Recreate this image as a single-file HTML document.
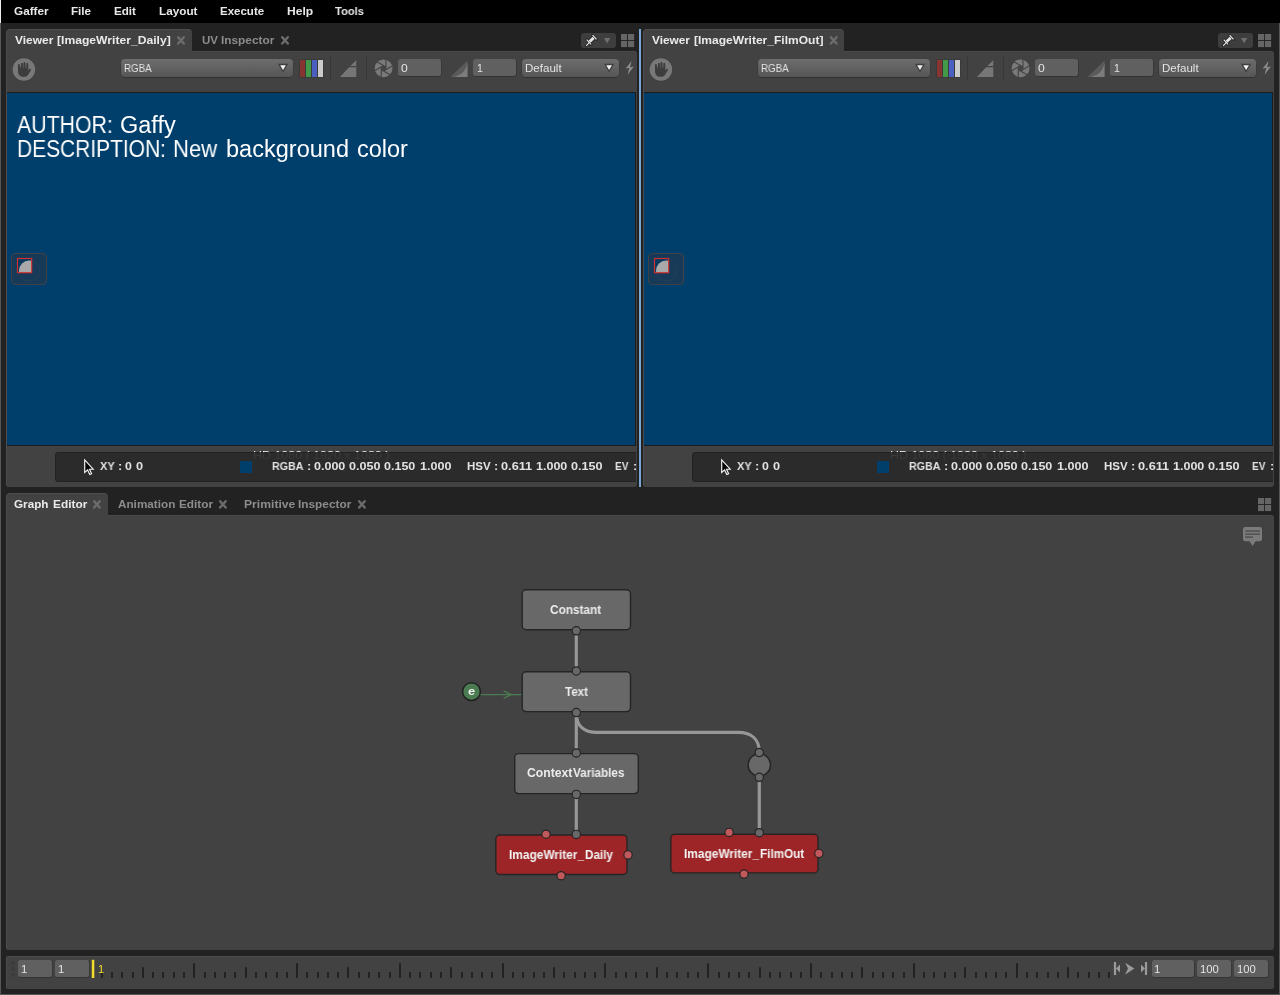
<!DOCTYPE html>
<html><head><meta charset="utf-8"><title>Gaffer</title>
<style>
html,body{margin:0;padding:0}
body{width:1280px;height:995px;position:relative;overflow:hidden;background:#222222;font-family:"Liberation Sans",sans-serif}
.abs{position:absolute}
.menubar{position:absolute;left:0;top:0;width:1280px;height:23px;background:#000}
.tab{position:absolute;box-sizing:border-box}
.tab.act{background:#424242;border-radius:4px 4px 0 0;border-left:1px solid #4d4d4d;border-top:1px solid #4e4e4e}
.panel{position:absolute;box-sizing:border-box;background:#424242;border-left:1px solid #4d4d4d;border-top:1px solid #4a4a4a}
.pinbtn{position:absolute;width:35px;height:14.8px;background:#3e3e3e;border-radius:3px}
.combo{position:absolute;box-sizing:border-box;border-radius:4px;background:linear-gradient(#6d6d6d,#565656);box-shadow:0 0.5px 0.5px 0.3px rgba(30,30,30,0.55)}
.field{position:absolute;box-sizing:border-box;border-radius:2.5px;background:#606060;box-shadow:0.3px 0.6px 0.6px 0.2px rgba(30,30,30,0.5)}
.t{position:absolute;white-space:nowrap;will-change:transform;transform-origin:0 0}
#clipL,#clipR{position:absolute;overflow:hidden}
</style></head><body>
<div class="menubar"></div>
<div class="panel" style="left:6px;top:51px;width:631px;height:436px;border-radius:0 3px 3px 3px"></div>
<div class="tab act" style="left:6px;top:29px;width:185.5px;height:23px"></div>
<svg class="abs" style="left:175px;top:34px" width="13" height="13" viewBox="-6.00 -6.40 13 13"><path d="M-2.8 -3.15 L2.8 3.15 M2.8 -3.15 L-2.8 3.15" stroke="#6c6c6c" stroke-width="2.45" stroke-linecap="round"/></svg>
<svg class="abs" style="left:279px;top:34px" width="13" height="13" viewBox="-6.00 -6.40 13 13"><path d="M-2.8 -3.15 L2.8 3.15 M2.8 -3.15 L-2.8 3.15" stroke="#6c6c6c" stroke-width="2.45" stroke-linecap="round"/></svg>
<div class="pinbtn" style="left:581px;top:33px"></div>
<svg class="abs" style="left:583px;top:33px" width="16" height="15" viewBox="583 33 16 15"><g stroke="#1f1f1f" stroke-width="2.6" stroke-linecap="round" fill="none" opacity="0.75"><path d="M586.2 45.8 L589.6 42.2"/><path d="M586.6 39.5 L591.3 44.6"/><path d="M592.5 35.1 L596.6 39.5"/><path d="M588.6 40.4 L590.6 42.8 L594.8 39 L592.7 36.6 Z" stroke-width="1.6" fill="#1f1f1f"/></g><path d="M586.2 45.8 L589.6 42.2" stroke="#f0f0f0" stroke-width="1.05"/><path d="M586.7 39.6 L591.2 44.5" stroke="#f0f0f0" stroke-width="1.05"/><path d="M592.6 35.2 L596.5 39.4" stroke="#f0f0f0" stroke-width="1.1"/><path d="M588.7 40.5 L590.5 42.7 L594.6 39 L592.7 36.8 Z" fill="#e6e6e6"/></svg>
<svg class="abs" style="left:603px;top:37px" width="9" height="8" viewBox="603 37 9 8"><path d="M603.9 38 L610.3 38 L607.1 43.4 Z" fill="#6e6e6e"/></svg>
<svg class="abs" style="left:621px;top:34px" width="14" height="14" viewBox="0 0 14 14"><rect x="-0.1" y="-0.05" width="6.15" height="6.1" fill="#656565"/><rect x="6.95" y="-0.05" width="6.2" height="6.1" fill="#656565"/><rect x="-0.1" y="6.95" width="6.15" height="6.15" fill="#656565"/><rect x="6.95" y="6.95" width="6.2" height="6.15" fill="#656565"/></svg>
<svg class="abs" style="left:12px;top:57px" width="24" height="25" viewBox="12 57 24 25"><circle cx="23.9" cy="69.45" r="11.7" fill="#3e3e3e"/><circle cx="23.9" cy="69.45" r="11.3" fill="#787878"/><rect x="18.0" y="64.2" width="1.75" height="5.80" rx="0.8" fill="#3d3d3d"/><rect x="21.0" y="63.0" width="1.70" height="7.00" rx="0.8" fill="#3d3d3d"/><rect x="23.7" y="62.2" width="1.60" height="7.80" rx="0.8" fill="#3d3d3d"/><rect x="26.6" y="63.1" width="1.55" height="6.90" rx="0.8" fill="#3d3d3d"/><rect x="19.7" y="66.3" width="7" height="3" fill="#565656"/><rect x="18.0" y="64.2" width="1.75" height="5.80" rx="0.8" fill="#3d3d3d"/><rect x="21.0" y="63.0" width="1.70" height="7.00" rx="0.8" fill="#3d3d3d"/><rect x="23.7" y="62.2" width="1.60" height="7.80" rx="0.8" fill="#3d3d3d"/><rect x="26.6" y="63.1" width="1.55" height="6.90" rx="0.8" fill="#3d3d3d"/><path d="M18 68.3 L18.1 72 C18.3 74.6 19.8 76.5 22.3 76.65 L25 76.65 C26.6 76.5 27.6 75.6 28.4 74.2 L31.2 69.7 L30 68.5 L28.15 70.6 L28.15 68.3 Z" fill="#3d3d3d"/></svg>
<div class="combo" style="left:121px;top:59px;width:172px;height:18px"></div>
<svg class="abs" style="left:277px;top:62px" width="13" height="12" viewBox="0 0 13 12"><path d="M2.00 2.50 L10.00 2.50 L6.00 9.40 Z" fill="#f2f2f2" stroke="#3f3f3f" stroke-width="1.3" stroke-linejoin="miter"/></svg>
<div class="abs" style="left:299.3px;top:59.3px;width:24.6px;height:18.4px;background:#3a3a3a;border-radius:1px"></div>
<div class="abs" style="left:299.9px;top:59.9px;width:5.3px;height:17.2px;background:#873531"></div>
<div class="abs" style="left:305.9px;top:59.9px;width:5.3px;height:17.2px;background:#429948"></div>
<div class="abs" style="left:311.9px;top:59.9px;width:5.3px;height:17.2px;background:#4b5fc1"></div>
<div class="abs" style="left:317.9px;top:59.9px;width:5.3px;height:17.2px;background:#cbcbcb"></div>
<div class="abs" style="left:330px;top:56px;width:1px;height:25px;background:#383838"></div>
<div class="abs" style="left:366px;top:56px;width:1px;height:25px;background:#383838"></div>
<svg class="abs" style="left:339px;top:59px" width="19" height="19" viewBox="0 0 19 19"><path d="M1 18 L17.3 18 L17.3 8.3 L10.1 8.3 Z M11.3 7.1 L17.3 7.1 L17.3 1.2 Z" fill="#767676"/></svg>
<svg class="abs" style="left:374px;top:59px" width="20" height="20" viewBox="-0.60 -0.30 20 20"><circle cx="9" cy="9" r="8.9" fill="#7a7a7a"/><polygon points="11.35,10.36 9.00,11.71 6.65,10.36 6.65,7.64 9.00,6.29 11.35,7.64" fill="#454545"/><path d="M11.35 10.36 L11.35 0.06" stroke="#454545" stroke-width="1.15"/><path d="M9.00 11.71 L17.92 6.56" stroke="#454545" stroke-width="1.15"/><path d="M6.65 10.36 L15.57 15.51" stroke="#454545" stroke-width="1.15"/><path d="M6.65 7.64 L6.65 17.94" stroke="#454545" stroke-width="1.15"/><path d="M9.00 6.29 L0.08 11.44" stroke="#454545" stroke-width="1.15"/><path d="M11.35 7.64 L2.43 2.49" stroke="#454545" stroke-width="1.15"/></svg>
<div class="field" style="left:398.3px;top:59px;width:42.8px;height:17.2px"></div>
<svg class="abs" style="left:449px;top:59px" width="20" height="19" viewBox="0 0 20 19"><path d="M1.5 18 L18.5 18 L18.5 1.5 Z" fill="#5a5a5a"/><path d="M4.5 18 L18.5 18 L18.5 4 C 17 12, 12 16.5, 4.5 18 Z" fill="#7c7c7c"/></svg>
<div class="field" style="left:473.3px;top:59px;width:42.7px;height:17.2px"></div>
<div class="combo" style="left:522px;top:59px;width:97px;height:18px"></div>
<svg class="abs" style="left:603px;top:62px" width="13" height="12" viewBox="0 0 13 12"><path d="M2.10 2.50 L10.10 2.50 L6.10 9.40 Z" fill="#f2f2f2" stroke="#3f3f3f" stroke-width="1.3" stroke-linejoin="miter"/></svg>
<svg class="abs" style="left:623px;top:60px" width="13" height="16" viewBox="0 0 13 16"><path d="M8.6 1 L2.6 8.6 L6.3 8.1 L4.6 14.8 L10.9 6.6 L7.1 7.2 Z" fill="#8a8a8a"/></svg>
<div class="abs" style="left:7px;top:92px;width:629px;height:354px;background:#1c1c1c"></div>
<div class="abs" style="left:7px;top:93px;width:628px;height:352px;background:#003f6c"></div>
<div class="abs" style="left:11px;top:253px;width:36px;height:32px;box-sizing:border-box;border:1px solid #3e4247;border-radius:4px;background:#163a58"></div>
<svg class="abs" style="left:11px;top:253px" width="36" height="32" viewBox="0 0 36 32"><circle cx="18.2" cy="17.7" r="10.4" fill="none" stroke="#2a4055" stroke-width="0.8"/><clipPath id="cp0"><rect x="6.5" y="5.5" width="14.5" height="14.5"/></clipPath><rect x="6.5" y="5.5" width="14.5" height="14.5" fill="#0b3a60"/><circle cx="18.2" cy="17.7" r="10.2" fill="#a9a9a9" clip-path="url(#cp0)"/><rect x="6.5" y="5.5" width="14.2" height="14.2" fill="none" stroke="#d32e2e" stroke-width="1.15"/></svg>
<div class="abs" style="left:55px;top:452px;width:581px;height:30px;overflow:hidden"><div class="abs" style="left:0;top:0;width:700px;height:30px;box-sizing:border-box;background:#2b2b2b;border:1px solid #222;border-radius:3px"></div></div>
<svg class="abs" style="left:82px;top:457px" width="14" height="20" viewBox="82 457 14 20"><path d="M84.7 459.9 L84.7 472.5 L87.6 469.9 L89.8 474.6 L91.6 473.8 L89.5 469.3 L93.2 469.2 Z" fill="#050505" stroke="#f6f6f6" stroke-width="1.15" stroke-linejoin="miter"/></svg>
<div class="abs" style="left:240px;top:461px;width:12px;height:12px;background:#003f6c"></div>
<div class="panel" style="left:643px;top:51px;width:631px;height:436px;border-radius:0 3px 3px 3px"></div>
<div class="tab act" style="left:643px;top:29px;width:201.4px;height:23px"></div>
<svg class="abs" style="left:827px;top:34px" width="13" height="13" viewBox="-6.70 -6.40 13 13"><path d="M-2.8 -3.15 L2.8 3.15 M2.8 -3.15 L-2.8 3.15" stroke="#6c6c6c" stroke-width="2.45" stroke-linecap="round"/></svg>
<div class="pinbtn" style="left:1218px;top:33px"></div>
<svg class="abs" style="left:1220px;top:33px" width="16" height="15" viewBox="583 33 16 15"><g stroke="#1f1f1f" stroke-width="2.6" stroke-linecap="round" fill="none" opacity="0.75"><path d="M586.2 45.8 L589.6 42.2"/><path d="M586.6 39.5 L591.3 44.6"/><path d="M592.5 35.1 L596.6 39.5"/><path d="M588.6 40.4 L590.6 42.8 L594.8 39 L592.7 36.6 Z" stroke-width="1.6" fill="#1f1f1f"/></g><path d="M586.2 45.8 L589.6 42.2" stroke="#f0f0f0" stroke-width="1.05"/><path d="M586.7 39.6 L591.2 44.5" stroke="#f0f0f0" stroke-width="1.05"/><path d="M592.6 35.2 L596.5 39.4" stroke="#f0f0f0" stroke-width="1.1"/><path d="M588.7 40.5 L590.5 42.7 L594.6 39 L592.7 36.8 Z" fill="#e6e6e6"/></svg>
<svg class="abs" style="left:1240px;top:37px" width="9" height="8" viewBox="603 37 9 8"><path d="M603.9 38 L610.3 38 L607.1 43.4 Z" fill="#6e6e6e"/></svg>
<svg class="abs" style="left:1258px;top:34px" width="14" height="14" viewBox="0 0 14 14"><rect x="-0.1" y="-0.05" width="6.15" height="6.1" fill="#656565"/><rect x="6.95" y="-0.05" width="6.2" height="6.1" fill="#656565"/><rect x="-0.1" y="6.95" width="6.15" height="6.15" fill="#656565"/><rect x="6.95" y="6.95" width="6.2" height="6.15" fill="#656565"/></svg>
<svg class="abs" style="left:649px;top:57px" width="24" height="25" viewBox="12 57 24 25"><circle cx="23.9" cy="69.45" r="11.7" fill="#3e3e3e"/><circle cx="23.9" cy="69.45" r="11.3" fill="#787878"/><rect x="18.0" y="64.2" width="1.75" height="5.80" rx="0.8" fill="#3d3d3d"/><rect x="21.0" y="63.0" width="1.70" height="7.00" rx="0.8" fill="#3d3d3d"/><rect x="23.7" y="62.2" width="1.60" height="7.80" rx="0.8" fill="#3d3d3d"/><rect x="26.6" y="63.1" width="1.55" height="6.90" rx="0.8" fill="#3d3d3d"/><rect x="19.7" y="66.3" width="7" height="3" fill="#565656"/><rect x="18.0" y="64.2" width="1.75" height="5.80" rx="0.8" fill="#3d3d3d"/><rect x="21.0" y="63.0" width="1.70" height="7.00" rx="0.8" fill="#3d3d3d"/><rect x="23.7" y="62.2" width="1.60" height="7.80" rx="0.8" fill="#3d3d3d"/><rect x="26.6" y="63.1" width="1.55" height="6.90" rx="0.8" fill="#3d3d3d"/><path d="M18 68.3 L18.1 72 C18.3 74.6 19.8 76.5 22.3 76.65 L25 76.65 C26.6 76.5 27.6 75.6 28.4 74.2 L31.2 69.7 L30 68.5 L28.15 70.6 L28.15 68.3 Z" fill="#3d3d3d"/></svg>
<div class="combo" style="left:758px;top:59px;width:172px;height:18px"></div>
<svg class="abs" style="left:914px;top:62px" width="13" height="12" viewBox="0 0 13 12"><path d="M2.00 2.50 L10.00 2.50 L6.00 9.40 Z" fill="#f2f2f2" stroke="#3f3f3f" stroke-width="1.3" stroke-linejoin="miter"/></svg>
<div class="abs" style="left:936.3px;top:59.3px;width:24.6px;height:18.4px;background:#3a3a3a;border-radius:1px"></div>
<div class="abs" style="left:936.9px;top:59.9px;width:5.3px;height:17.2px;background:#873531"></div>
<div class="abs" style="left:942.9px;top:59.9px;width:5.3px;height:17.2px;background:#429948"></div>
<div class="abs" style="left:948.9px;top:59.9px;width:5.3px;height:17.2px;background:#4b5fc1"></div>
<div class="abs" style="left:954.9px;top:59.9px;width:5.3px;height:17.2px;background:#cbcbcb"></div>
<div class="abs" style="left:967px;top:56px;width:1px;height:25px;background:#383838"></div>
<div class="abs" style="left:1003px;top:56px;width:1px;height:25px;background:#383838"></div>
<svg class="abs" style="left:976px;top:59px" width="19" height="19" viewBox="0 0 19 19"><path d="M1 18 L17.3 18 L17.3 8.3 L10.1 8.3 Z M11.3 7.1 L17.3 7.1 L17.3 1.2 Z" fill="#767676"/></svg>
<svg class="abs" style="left:1011px;top:59px" width="20" height="20" viewBox="-0.60 -0.30 20 20"><circle cx="9" cy="9" r="8.9" fill="#7a7a7a"/><polygon points="11.35,10.36 9.00,11.71 6.65,10.36 6.65,7.64 9.00,6.29 11.35,7.64" fill="#454545"/><path d="M11.35 10.36 L11.35 0.06" stroke="#454545" stroke-width="1.15"/><path d="M9.00 11.71 L17.92 6.56" stroke="#454545" stroke-width="1.15"/><path d="M6.65 10.36 L15.57 15.51" stroke="#454545" stroke-width="1.15"/><path d="M6.65 7.64 L6.65 17.94" stroke="#454545" stroke-width="1.15"/><path d="M9.00 6.29 L0.08 11.44" stroke="#454545" stroke-width="1.15"/><path d="M11.35 7.64 L2.43 2.49" stroke="#454545" stroke-width="1.15"/></svg>
<div class="field" style="left:1035.3px;top:59px;width:42.8px;height:17.2px"></div>
<svg class="abs" style="left:1086px;top:59px" width="20" height="19" viewBox="0 0 20 19"><path d="M1.5 18 L18.5 18 L18.5 1.5 Z" fill="#5a5a5a"/><path d="M4.5 18 L18.5 18 L18.5 4 C 17 12, 12 16.5, 4.5 18 Z" fill="#7c7c7c"/></svg>
<div class="field" style="left:1110.3px;top:59px;width:42.7px;height:17.2px"></div>
<div class="combo" style="left:1159px;top:59px;width:97px;height:18px"></div>
<svg class="abs" style="left:1240px;top:62px" width="13" height="12" viewBox="0 0 13 12"><path d="M2.10 2.50 L10.10 2.50 L6.10 9.40 Z" fill="#f2f2f2" stroke="#3f3f3f" stroke-width="1.3" stroke-linejoin="miter"/></svg>
<svg class="abs" style="left:1260px;top:60px" width="13" height="16" viewBox="0 0 13 16"><path d="M8.6 1 L2.6 8.6 L6.3 8.1 L4.6 14.8 L10.9 6.6 L7.1 7.2 Z" fill="#8a8a8a"/></svg>
<div class="abs" style="left:644px;top:92px;width:629px;height:354px;background:#1c1c1c"></div>
<div class="abs" style="left:644px;top:93px;width:628px;height:352px;background:#003f6c"></div>
<div class="abs" style="left:648px;top:253px;width:36px;height:32px;box-sizing:border-box;border:1px solid #3e4247;border-radius:4px;background:#163a58"></div>
<svg class="abs" style="left:648px;top:253px" width="36" height="32" viewBox="0 0 36 32"><circle cx="18.2" cy="17.7" r="10.4" fill="none" stroke="#2a4055" stroke-width="0.8"/><clipPath id="cp637"><rect x="6.5" y="5.5" width="14.5" height="14.5"/></clipPath><rect x="6.5" y="5.5" width="14.5" height="14.5" fill="#0b3a60"/><circle cx="18.2" cy="17.7" r="10.2" fill="#a9a9a9" clip-path="url(#cp637)"/><rect x="6.5" y="5.5" width="14.2" height="14.2" fill="none" stroke="#d32e2e" stroke-width="1.15"/></svg>
<div class="abs" style="left:692px;top:452px;width:581px;height:30px;overflow:hidden"><div class="abs" style="left:0;top:0;width:700px;height:30px;box-sizing:border-box;background:#2b2b2b;border:1px solid #222;border-radius:3px"></div></div>
<svg class="abs" style="left:719px;top:457px" width="14" height="20" viewBox="82 457 14 20"><path d="M84.7 459.9 L84.7 472.5 L87.6 469.9 L89.8 474.6 L91.6 473.8 L89.5 469.3 L93.2 469.2 Z" fill="#050505" stroke="#f6f6f6" stroke-width="1.15" stroke-linejoin="miter"/></svg>
<div class="abs" style="left:877px;top:461px;width:12px;height:12px;background:#003f6c"></div>
<div class="abs" style="left:639px;top:29px;width:2px;height:458px;background:#7ba7d6"></div>
<div class="panel" style="left:6px;top:515px;width:1268px;height:435px;border-radius:0 3px 3px 3px"></div>
<div class="tab act" style="left:6px;top:493px;width:101.5px;height:23px"></div>
<svg class="abs" style="left:90px;top:498px" width="13" height="13" viewBox="-6.90 -6.40 13 13"><path d="M-2.8 -3.15 L2.8 3.15 M2.8 -3.15 L-2.8 3.15" stroke="#6c6c6c" stroke-width="2.45" stroke-linecap="round"/></svg>
<svg class="abs" style="left:216px;top:498px" width="13" height="13" viewBox="-6.90 -6.40 13 13"><path d="M-2.8 -3.15 L2.8 3.15 M2.8 -3.15 L-2.8 3.15" stroke="#6c6c6c" stroke-width="2.45" stroke-linecap="round"/></svg>
<svg class="abs" style="left:355px;top:498px" width="13" height="13" viewBox="-6.90 -6.40 13 13"><path d="M-2.8 -3.15 L2.8 3.15 M2.8 -3.15 L-2.8 3.15" stroke="#6c6c6c" stroke-width="2.45" stroke-linecap="round"/></svg>
<svg class="abs" style="left:1258px;top:498px" width="14" height="14" viewBox="0 0 14 14"><rect x="-0.1" y="-0.05" width="6.15" height="6.1" fill="#656565"/><rect x="6.95" y="-0.05" width="6.2" height="6.1" fill="#656565"/><rect x="-0.1" y="6.95" width="6.15" height="6.15" fill="#656565"/><rect x="6.95" y="6.95" width="6.2" height="6.15" fill="#656565"/></svg>
<svg class="abs" style="left:1242px;top:526px" width="22" height="22" viewBox="0 0 22 22"><path d="M3.3 1 L17.7 1 Q20 1 20 3.3 L20 13 Q20 15.3 17.7 15.3 L13.6 15.3 L10.5 20 L7.6 15.3 L3.3 15.3 Q1 15.3 1 13 L1 3.3 Q1 1 3.3 1 Z" fill="#7b7b7b"/><rect x="3.2" y="4.3" width="14.8" height="1.5" fill="#505050"/><rect x="3.2" y="7.4" width="14.8" height="1.5" fill="#505050"/><rect x="3.2" y="10.4" width="7.8" height="1.5" fill="#505050"/></svg>
<svg class="abs" style="left:0;top:515px" width="1280" height="435" viewBox="0 515 1280 435">
<g fill="none" stroke="#979797" stroke-width="3.2" stroke-linecap="butt">
<path d="M576.3 631 L576.3 671"/>
<path d="M576.3 713 L576.3 753"/>
<path d="M576.3 795 L576.3 834"/>
<path d="M576.3 713 C 576.3 726, 584 732.4, 597 732.4 L 738 732.4 C 751 732.4, 759.3 739, 759.3 752"/>
<path d="M759.3 777 L759.3 833"/>
</g>
<g fill="none" stroke="#4a7c4f" stroke-width="1.35"><path d="M480 694.6 L521.5 694.6"/><path d="M503.6 690.8 L511.3 694.6 L503.6 698.4" stroke-linejoin="miter"/></g>
<rect x="522.2" y="589.7" width="108.29999999999995" height="40.09999999999991" rx="4" ry="4" fill="#686868" stroke="#252525" stroke-width="1.4"/>
<rect x="522.2" y="671.7" width="108.29999999999995" height="39.89999999999998" rx="4" ry="4" fill="#686868" stroke="#252525" stroke-width="1.4"/>
<rect x="514.7" y="753.6" width="123.59999999999991" height="40.0" rx="4" ry="4" fill="#686868" stroke="#252525" stroke-width="1.4"/>
<rect x="495.8" y="835.0" width="131.2" height="39.5" rx="4" ry="4" fill="#9d2527" stroke="#252525" stroke-width="1.4"/>
<rect x="670.8" y="834.2" width="147.20000000000005" height="38.69999999999993" rx="4" ry="4" fill="#9d2527" stroke="#252525" stroke-width="1.4"/>
<circle cx="759.3" cy="764.9" r="11.2" fill="#686868" stroke="#252525" stroke-width="1.45"/>
<circle cx="576.3" cy="630.8" r="4.15" fill="#686868" stroke="#252525" stroke-width="1.15"/>
<circle cx="576.3" cy="671.0" r="4.15" fill="#686868" stroke="#252525" stroke-width="1.15"/>
<circle cx="576.3" cy="712.6" r="4.15" fill="#686868" stroke="#252525" stroke-width="1.15"/>
<circle cx="576.3" cy="753.0" r="4.15" fill="#686868" stroke="#252525" stroke-width="1.15"/>
<circle cx="576.3" cy="794.4" r="4.15" fill="#686868" stroke="#252525" stroke-width="1.15"/>
<circle cx="576.3" cy="834.4" r="4.15" fill="#686868" stroke="#252525" stroke-width="1.15"/>
<circle cx="759.3" cy="752.6" r="4.15" fill="#686868" stroke="#252525" stroke-width="1.15"/>
<circle cx="759.3" cy="777.3" r="4.15" fill="#686868" stroke="#252525" stroke-width="1.15"/>
<circle cx="759.3" cy="832.7" r="4.15" fill="#686868" stroke="#252525" stroke-width="1.15"/>
<circle cx="546" cy="834.2" r="4.15" fill="#c1595c" stroke="#252525" stroke-width="1.15"/>
<circle cx="628" cy="854.9" r="4.15" fill="#c1595c" stroke="#252525" stroke-width="1.15"/>
<circle cx="561.1" cy="875.7" r="4.15" fill="#c1595c" stroke="#252525" stroke-width="1.15"/>
<circle cx="729.1" cy="832.4" r="4.15" fill="#c1595c" stroke="#252525" stroke-width="1.15"/>
<circle cx="818.9" cy="853.4" r="4.15" fill="#c1595c" stroke="#252525" stroke-width="1.15"/>
<circle cx="744" cy="874.1" r="4.15" fill="#c1595c" stroke="#252525" stroke-width="1.15"/>
<circle cx="471.5" cy="691.6" r="8.9" fill="#4b7b50" stroke="#212121" stroke-width="1.5"/>
</svg>
<div class="panel" style="left:6px;top:956px;width:1268px;height:33px;border-radius:2px"></div>
<div class="abs" style="left:11px;top:961px;width:4px;height:4px;border-radius:2px;background:#3b3b3b"></div>
<div class="abs" style="left:11px;top:967px;width:4px;height:4px;border-radius:2px;background:#3b3b3b"></div>
<div class="abs" style="left:11px;top:973px;width:4px;height:4px;border-radius:2px;background:#3b3b3b"></div>
<div class="field" style="left:18.3px;top:960.1px;width:33.7px;height:17px"></div>
<div class="field" style="left:55.3px;top:960.1px;width:33.7px;height:17px"></div>
<div class="field" style="left:1151.6px;top:960.1px;width:42.4px;height:17px"></div>
<div class="field" style="left:1197.3px;top:960.1px;width:33.9px;height:17px"></div>
<div class="field" style="left:1234.3px;top:960.1px;width:33.8px;height:17px"></div>
<svg class="abs" style="left:0;top:956px" width="1280" height="33" viewBox="0 956 1280 33"><rect x="101" y="972.1" width="2" height="5.90" fill="#222222"/><rect x="111" y="972.1" width="2" height="5.90" fill="#222222"/><rect x="121" y="972.1" width="2" height="5.90" fill="#222222"/><rect x="132" y="972.1" width="2" height="5.90" fill="#222222"/><rect x="142" y="967.2" width="2" height="10.80" fill="#222222"/><rect x="152" y="972.1" width="2" height="5.90" fill="#222222"/><rect x="162" y="972.1" width="2" height="5.90" fill="#222222"/><rect x="173" y="972.1" width="2" height="5.90" fill="#222222"/><rect x="183" y="972.1" width="2" height="5.90" fill="#222222"/><rect x="193" y="963.2" width="2" height="14.80" fill="#222222"/><rect x="204" y="972.1" width="2" height="5.90" fill="#222222"/><rect x="214" y="972.1" width="2" height="5.90" fill="#222222"/><rect x="224" y="972.1" width="2" height="5.90" fill="#222222"/><rect x="234" y="972.1" width="2" height="5.90" fill="#222222"/><rect x="245" y="967.2" width="2" height="10.80" fill="#222222"/><rect x="255" y="972.1" width="2" height="5.90" fill="#222222"/><rect x="265" y="972.1" width="2" height="5.90" fill="#222222"/><rect x="276" y="972.1" width="2" height="5.90" fill="#222222"/><rect x="286" y="972.1" width="2" height="5.90" fill="#222222"/><rect x="296" y="963.2" width="2" height="14.80" fill="#222222"/><rect x="306" y="972.1" width="2" height="5.90" fill="#222222"/><rect x="317" y="972.1" width="2" height="5.90" fill="#222222"/><rect x="327" y="972.1" width="2" height="5.90" fill="#222222"/><rect x="337" y="972.1" width="2" height="5.90" fill="#222222"/><rect x="347" y="967.2" width="2" height="10.80" fill="#222222"/><rect x="358" y="972.1" width="2" height="5.90" fill="#222222"/><rect x="368" y="972.1" width="2" height="5.90" fill="#222222"/><rect x="378" y="972.1" width="2" height="5.90" fill="#222222"/><rect x="389" y="972.1" width="2" height="5.90" fill="#222222"/><rect x="399" y="963.2" width="2" height="14.80" fill="#222222"/><rect x="409" y="972.1" width="2" height="5.90" fill="#222222"/><rect x="419" y="972.1" width="2" height="5.90" fill="#222222"/><rect x="430" y="972.1" width="2" height="5.90" fill="#222222"/><rect x="440" y="972.1" width="2" height="5.90" fill="#222222"/><rect x="450" y="967.2" width="2" height="10.80" fill="#222222"/><rect x="461" y="972.1" width="2" height="5.90" fill="#222222"/><rect x="471" y="972.1" width="2" height="5.90" fill="#222222"/><rect x="481" y="972.1" width="2" height="5.90" fill="#222222"/><rect x="491" y="972.1" width="2" height="5.90" fill="#222222"/><rect x="502" y="963.2" width="2" height="14.80" fill="#222222"/><rect x="512" y="972.1" width="2" height="5.90" fill="#222222"/><rect x="522" y="972.1" width="2" height="5.90" fill="#222222"/><rect x="533" y="972.1" width="2" height="5.90" fill="#222222"/><rect x="543" y="972.1" width="2" height="5.90" fill="#222222"/><rect x="553" y="967.2" width="2" height="10.80" fill="#222222"/><rect x="563" y="972.1" width="2" height="5.90" fill="#222222"/><rect x="574" y="972.1" width="2" height="5.90" fill="#222222"/><rect x="584" y="972.1" width="2" height="5.90" fill="#222222"/><rect x="594" y="972.1" width="2" height="5.90" fill="#222222"/><rect x="604" y="963.2" width="2" height="14.80" fill="#222222"/><rect x="615" y="972.1" width="2" height="5.90" fill="#222222"/><rect x="625" y="972.1" width="2" height="5.90" fill="#222222"/><rect x="635" y="972.1" width="2" height="5.90" fill="#222222"/><rect x="646" y="972.1" width="2" height="5.90" fill="#222222"/><rect x="656" y="967.2" width="2" height="10.80" fill="#222222"/><rect x="666" y="972.1" width="2" height="5.90" fill="#222222"/><rect x="676" y="972.1" width="2" height="5.90" fill="#222222"/><rect x="687" y="972.1" width="2" height="5.90" fill="#222222"/><rect x="697" y="972.1" width="2" height="5.90" fill="#222222"/><rect x="707" y="963.2" width="2" height="14.80" fill="#222222"/><rect x="718" y="972.1" width="2" height="5.90" fill="#222222"/><rect x="728" y="972.1" width="2" height="5.90" fill="#222222"/><rect x="738" y="972.1" width="2" height="5.90" fill="#222222"/><rect x="748" y="972.1" width="2" height="5.90" fill="#222222"/><rect x="759" y="967.2" width="2" height="10.80" fill="#222222"/><rect x="769" y="972.1" width="2" height="5.90" fill="#222222"/><rect x="779" y="972.1" width="2" height="5.90" fill="#222222"/><rect x="790" y="972.1" width="2" height="5.90" fill="#222222"/><rect x="800" y="972.1" width="2" height="5.90" fill="#222222"/><rect x="810" y="963.2" width="2" height="14.80" fill="#222222"/><rect x="820" y="972.1" width="2" height="5.90" fill="#222222"/><rect x="831" y="972.1" width="2" height="5.90" fill="#222222"/><rect x="841" y="972.1" width="2" height="5.90" fill="#222222"/><rect x="851" y="972.1" width="2" height="5.90" fill="#222222"/><rect x="861" y="967.2" width="2" height="10.80" fill="#222222"/><rect x="872" y="972.1" width="2" height="5.90" fill="#222222"/><rect x="882" y="972.1" width="2" height="5.90" fill="#222222"/><rect x="892" y="972.1" width="2" height="5.90" fill="#222222"/><rect x="903" y="972.1" width="2" height="5.90" fill="#222222"/><rect x="913" y="963.2" width="2" height="14.80" fill="#222222"/><rect x="923" y="972.1" width="2" height="5.90" fill="#222222"/><rect x="933" y="972.1" width="2" height="5.90" fill="#222222"/><rect x="944" y="972.1" width="2" height="5.90" fill="#222222"/><rect x="954" y="972.1" width="2" height="5.90" fill="#222222"/><rect x="964" y="967.2" width="2" height="10.80" fill="#222222"/><rect x="975" y="972.1" width="2" height="5.90" fill="#222222"/><rect x="985" y="972.1" width="2" height="5.90" fill="#222222"/><rect x="995" y="972.1" width="2" height="5.90" fill="#222222"/><rect x="1005" y="972.1" width="2" height="5.90" fill="#222222"/><rect x="1016" y="963.2" width="2" height="14.80" fill="#222222"/><rect x="1026" y="972.1" width="2" height="5.90" fill="#222222"/><rect x="1036" y="972.1" width="2" height="5.90" fill="#222222"/><rect x="1047" y="972.1" width="2" height="5.90" fill="#222222"/><rect x="1057" y="972.1" width="2" height="5.90" fill="#222222"/><rect x="1067" y="967.2" width="2" height="10.80" fill="#222222"/><rect x="1077" y="972.1" width="2" height="5.90" fill="#222222"/><rect x="1088" y="972.1" width="2" height="5.90" fill="#222222"/><rect x="1098" y="972.1" width="2" height="5.90" fill="#222222"/><rect x="1108" y="972.1" width="2" height="5.90" fill="#222222"/><rect x="91.8" y="959.8" width="2.5" height="18.2" fill="#f2de2a"/><rect x="1113.9" y="962" width="2.2" height="13" fill="#9a9a9a"/><path d="M1116 968.4 L1120 964.4 L1120 972.5 Z" fill="#9a9a9a"/><path d="M1125.2 962.8 L1134.4 968.5 L1125 974.8 L1128 968.6 Z" fill="#9a9a9a"/><rect x="1144.9" y="962" width="2.2" height="13" fill="#9a9a9a"/><path d="M1145 968.4 L1141 964.4 L1141 972.5 Z" fill="#9a9a9a"/></svg>
<div class="abs" style="left:0;top:0;width:1px;height:23px;background:#ededed"></div>
<div class="abs" style="left:0;top:23px;width:1px;height:972px;background:#575757"></div>
<div class="abs" style="left:1279px;top:23px;width:1px;height:972px;background:#575757"></div>
<div class="abs" style="left:0;top:994px;width:1280px;height:1px;background:#575757"></div>
<span class="t" id="t0" style="left:13.99px;top:4px;font-size:11.5px;line-height:14px;font-weight:bold;color:#e8e8e8;transform:scaleX(1.0226);">Gaffer</span>
<span class="t" id="t1" style="left:71.24px;top:4px;font-size:11.5px;line-height:14px;font-weight:bold;color:#e8e8e8;transform:scaleX(1.0133);">File</span>
<span class="t" id="t2" style="left:114.24px;top:4px;font-size:11.5px;line-height:14px;font-weight:bold;color:#e8e8e8;transform:scaleX(1.0120);">Edit</span>
<span class="t" id="t3" style="left:159.23px;top:4px;font-size:11.5px;line-height:14px;font-weight:bold;color:#e8e8e8;transform:scaleX(1.0204);">Layout</span>
<span class="t" id="t4" style="left:220.25px;top:4px;font-size:11.5px;line-height:14px;font-weight:bold;color:#e8e8e8;transform:scaleX(1.0000);">Execute</span>
<span class="t" id="t5" style="left:286.71px;top:4px;font-size:11.5px;line-height:14px;font-weight:bold;color:#e8e8e8;transform:scaleX(1.0526);">Help</span>
<span class="t" id="t6" style="left:335.00px;top:4px;font-size:11.5px;line-height:14px;font-weight:bold;color:#e8e8e8;transform:scaleX(0.9675);">Tools</span>
<span class="t" id="t7" style="left:15.24px;top:33px;font-size:11.5px;line-height:14px;font-weight:bold;color:#eaeaea;transform:scaleX(1.0411);">Viewer</span>
<span class="t" id="t8" style="left:57.11px;top:33px;font-size:11.5px;line-height:14px;font-weight:bold;color:#eaeaea;transform:scaleX(1.0554);">[ImageWriter_Daily]</span>
<span class="t" id="t9" style="left:201.75px;top:33px;font-size:11.5px;line-height:14px;font-weight:bold;color:#8c8c8c;transform:scaleX(1.0000);">UV</span>
<span class="t" id="t10" style="left:221.13px;top:33px;font-size:11.5px;line-height:14px;font-weight:bold;color:#8c8c8c;transform:scaleX(1.0294);">Inspector</span>
<span class="t" id="t11" style="left:123.80px;top:62px;font-size:10.5px;line-height:13px;font-weight:normal;color:#e4e4e4;transform:scaleX(0.9310);">RGBA</span>
<span class="t" id="t12" style="left:400.92px;top:62px;font-size:10.5px;line-height:13px;font-weight:normal;color:#e4e4e4;transform:scaleX(1.1600);">0</span>
<span class="t" id="t13" style="left:476.75px;top:62px;font-size:10.5px;line-height:13px;font-weight:normal;color:#e4e4e4;transform:scaleX(1.0000);">1</span>
<span class="t" id="t14" style="left:524.67px;top:62px;font-size:10.5px;line-height:13px;font-weight:normal;color:#e4e4e4;transform:scaleX(1.1015);">Default</span>
<span class="t" id="t15" style="left:252.92px;top:448px;font-size:11.5px;line-height:14px;font-weight:normal;color:#f4f4f4;transform:scaleX(1.0825);clip-path: inset(3px 0 10px 0);">HD 1080 ( 1920 x 1080 )</span>
<span class="t" id="t16" style="left:252.92px;top:448px;font-size:11.5px;line-height:14px;font-weight:normal;color:#3a3a3a;transform:scaleX(1.0825);clip-path: inset(4px 0 0 0);">HD 1080 ( 1920 x 1080 )</span>
<span class="t" id="t17" style="left:99.86px;top:459px;font-size:11.5px;line-height:14px;font-weight:bold;color:#e2e2e2;transform:scaleX(0.9559);">XY</span>
<span class="t" id="t18" style="left:118.05px;top:459px;font-size:11.5px;line-height:14px;font-weight:bold;color:#e2e2e2;transform:scaleX(1.1200);">:</span>
<span class="t" id="t19" style="left:125.46px;top:459px;font-size:11.5px;line-height:14px;font-weight:bold;color:#e2e2e2;transform:scaleX(1.0727);">0</span>
<span class="t" id="t20" style="left:136.45px;top:459px;font-size:11.5px;line-height:14px;font-weight:bold;color:#e2e2e2;transform:scaleX(1.1091);">0</span>
<span class="t" id="t21" style="left:271.70px;top:459px;font-size:11.5px;line-height:14px;font-weight:bold;color:#e2e2e2;transform:scaleX(0.9282);">RGBA</span>
<span class="t" id="t22" style="left:306.50px;top:459px;font-size:11.5px;line-height:14px;font-weight:bold;color:#e2e2e2;transform:scaleX(1.1200);">:</span>
<span class="t" id="t23" style="left:313.96px;top:459px;font-size:11.5px;line-height:14px;font-weight:bold;color:#e2e2e2;transform:scaleX(1.0883);">0.000</span>
<span class="t" id="t24" style="left:349.05px;top:459px;font-size:11.5px;line-height:14px;font-weight:bold;color:#e2e2e2;transform:scaleX(1.0955);">0.050</span>
<span class="t" id="t25" style="left:384.16px;top:459px;font-size:11.5px;line-height:14px;font-weight:bold;color:#e2e2e2;transform:scaleX(1.0883);">0.150</span>
<span class="t" id="t26" style="left:419.58px;top:459px;font-size:11.5px;line-height:14px;font-weight:bold;color:#e2e2e2;transform:scaleX(1.0945);">1.000</span>
<span class="t" id="t27" style="left:466.96px;top:459px;font-size:11.5px;line-height:14px;font-weight:bold;color:#e2e2e2;transform:scaleX(0.9802);">HSV</span>
<span class="t" id="t28" style="left:493.80px;top:459px;font-size:11.5px;line-height:14px;font-weight:bold;color:#e2e2e2;transform:scaleX(1.1200);">:</span>
<span class="t" id="t29" style="left:500.95px;top:459px;font-size:11.5px;line-height:14px;font-weight:bold;color:#e2e2e2;transform:scaleX(1.1083);">0.611</span>
<span class="t" id="t30" style="left:536.48px;top:459px;font-size:11.5px;line-height:14px;font-weight:bold;color:#e2e2e2;transform:scaleX(1.0873);">1.000</span>
<span class="t" id="t31" style="left:571.25px;top:459px;font-size:11.5px;line-height:14px;font-weight:bold;color:#e2e2e2;transform:scaleX(1.0991);">0.150</span>
<span class="t" id="t32" style="left:615.14px;top:459px;font-size:11.5px;line-height:14px;font-weight:bold;color:#e2e2e2;transform:scaleX(0.8759);">EV</span>
<span class="t" id="t33" style="left:632.90px;top:459px;font-size:11.5px;line-height:14px;font-weight:bold;color:#e2e2e2;transform:scaleX(1.1200);clip-path: inset(0 1.2px 0 0);">:</span>
<span class="t" id="t34" style="left:652.34px;top:33px;font-size:11.5px;line-height:14px;font-weight:bold;color:#eaeaea;transform:scaleX(1.0301);">Viewer</span>
<span class="t" id="t35" style="left:694.12px;top:33px;font-size:11.5px;line-height:14px;font-weight:bold;color:#eaeaea;transform:scaleX(1.0457);">[ImageWriter_FilmOut]</span>
<span class="t" id="t36" style="left:760.80px;top:62px;font-size:10.5px;line-height:13px;font-weight:normal;color:#e4e4e4;transform:scaleX(0.9310);">RGBA</span>
<span class="t" id="t37" style="left:1037.92px;top:62px;font-size:10.5px;line-height:13px;font-weight:normal;color:#e4e4e4;transform:scaleX(1.1600);">0</span>
<span class="t" id="t38" style="left:1113.75px;top:62px;font-size:10.5px;line-height:13px;font-weight:normal;color:#e4e4e4;transform:scaleX(1.0000);">1</span>
<span class="t" id="t39" style="left:1161.67px;top:62px;font-size:10.5px;line-height:13px;font-weight:normal;color:#e4e4e4;transform:scaleX(1.1015);">Default</span>
<span class="t" id="t40" style="left:889.92px;top:448px;font-size:11.5px;line-height:14px;font-weight:normal;color:#f4f4f4;transform:scaleX(1.0825);clip-path: inset(3px 0 10px 0);">HD 1080 ( 1920 x 1080 )</span>
<span class="t" id="t41" style="left:889.92px;top:448px;font-size:11.5px;line-height:14px;font-weight:normal;color:#3a3a3a;transform:scaleX(1.0825);clip-path: inset(4px 0 0 0);">HD 1080 ( 1920 x 1080 )</span>
<span class="t" id="t42" style="left:736.86px;top:459px;font-size:11.5px;line-height:14px;font-weight:bold;color:#e2e2e2;transform:scaleX(0.9559);">XY</span>
<span class="t" id="t43" style="left:755.05px;top:459px;font-size:11.5px;line-height:14px;font-weight:bold;color:#e2e2e2;transform:scaleX(1.1200);">:</span>
<span class="t" id="t44" style="left:762.46px;top:459px;font-size:11.5px;line-height:14px;font-weight:bold;color:#e2e2e2;transform:scaleX(1.0727);">0</span>
<span class="t" id="t45" style="left:773.45px;top:459px;font-size:11.5px;line-height:14px;font-weight:bold;color:#e2e2e2;transform:scaleX(1.1091);">0</span>
<span class="t" id="t46" style="left:908.70px;top:459px;font-size:11.5px;line-height:14px;font-weight:bold;color:#e2e2e2;transform:scaleX(0.9282);">RGBA</span>
<span class="t" id="t47" style="left:943.50px;top:459px;font-size:11.5px;line-height:14px;font-weight:bold;color:#e2e2e2;transform:scaleX(1.1200);">:</span>
<span class="t" id="t48" style="left:950.96px;top:459px;font-size:11.5px;line-height:14px;font-weight:bold;color:#e2e2e2;transform:scaleX(1.0883);">0.000</span>
<span class="t" id="t49" style="left:986.05px;top:459px;font-size:11.5px;line-height:14px;font-weight:bold;color:#e2e2e2;transform:scaleX(1.0955);">0.050</span>
<span class="t" id="t50" style="left:1021.16px;top:459px;font-size:11.5px;line-height:14px;font-weight:bold;color:#e2e2e2;transform:scaleX(1.0883);">0.150</span>
<span class="t" id="t51" style="left:1056.58px;top:459px;font-size:11.5px;line-height:14px;font-weight:bold;color:#e2e2e2;transform:scaleX(1.0945);">1.000</span>
<span class="t" id="t52" style="left:1103.96px;top:459px;font-size:11.5px;line-height:14px;font-weight:bold;color:#e2e2e2;transform:scaleX(0.9802);">HSV</span>
<span class="t" id="t53" style="left:1130.80px;top:459px;font-size:11.5px;line-height:14px;font-weight:bold;color:#e2e2e2;transform:scaleX(1.1200);">:</span>
<span class="t" id="t54" style="left:1137.95px;top:459px;font-size:11.5px;line-height:14px;font-weight:bold;color:#e2e2e2;transform:scaleX(1.1083);">0.611</span>
<span class="t" id="t55" style="left:1173.48px;top:459px;font-size:11.5px;line-height:14px;font-weight:bold;color:#e2e2e2;transform:scaleX(1.0873);">1.000</span>
<span class="t" id="t56" style="left:1208.25px;top:459px;font-size:11.5px;line-height:14px;font-weight:bold;color:#e2e2e2;transform:scaleX(1.0991);">0.150</span>
<span class="t" id="t57" style="left:1252.14px;top:459px;font-size:11.5px;line-height:14px;font-weight:bold;color:#e2e2e2;transform:scaleX(0.8759);">EV</span>
<span class="t" id="t58" style="left:1269.90px;top:459px;font-size:11.5px;line-height:14px;font-weight:bold;color:#e2e2e2;transform:scaleX(1.1200);clip-path: inset(0 1.2px 0 0);">:</span>
<span class="t" id="t59" style="left:14.49px;top:497px;font-size:11.5px;line-height:14px;font-weight:bold;color:#eaeaea;transform:scaleX(1.0168);">Graph</span>
<span class="t" id="t60" style="left:52.63px;top:497px;font-size:11.5px;line-height:14px;font-weight:bold;color:#eaeaea;transform:scaleX(1.0326);">Editor</span>
<span class="t" id="t61" style="left:117.75px;top:497px;font-size:11.5px;line-height:14px;font-weight:bold;color:#8c8c8c;transform:scaleX(1.0190);">Animation</span>
<span class="t" id="t62" style="left:178.83px;top:497px;font-size:11.5px;line-height:14px;font-weight:bold;color:#8c8c8c;transform:scaleX(1.0264);">Editor</span>
<span class="t" id="t63" style="left:243.81px;top:497px;font-size:11.5px;line-height:14px;font-weight:bold;color:#8c8c8c;transform:scaleX(1.0568);">Primitive</span>
<span class="t" id="t64" style="left:298.33px;top:497px;font-size:11.5px;line-height:14px;font-weight:bold;color:#8c8c8c;transform:scaleX(1.0294);">Inspector</span>
<span class="t" id="t65" style="left:550.41px;top:603px;font-size:12px;line-height:14px;font-weight:bold;color:#ececec;transform:scaleX(0.9834);">Constant</span>
<span class="t" id="t66" style="left:565.00px;top:685px;font-size:12px;line-height:14px;font-weight:bold;color:#ececec;transform:scaleX(0.9684);">Text</span>
<span class="t" id="t67" style="left:527.39px;top:766px;font-size:12px;line-height:14px;font-weight:bold;color:#ececec;transform:scaleX(1.0159);">Context</span>
<span class="t" id="t68" style="left:573.10px;top:766px;font-size:12px;line-height:14px;font-weight:bold;color:#ececec;transform:scaleX(0.9761);">Variables</span>
<span class="t" id="t69" style="left:508.76px;top:848px;font-size:12px;line-height:14px;font-weight:bold;color:#f4f4f4;transform:scaleX(0.9900);">ImageWriter_</span>
<span class="t" id="t70" style="left:584.57px;top:848px;font-size:12px;line-height:14px;font-weight:bold;color:#f4f4f4;transform:scaleX(0.9730);">Daily</span>
<span class="t" id="t71" style="left:683.76px;top:847px;font-size:12px;line-height:14px;font-weight:bold;color:#f4f4f4;transform:scaleX(0.9900);">ImageWriter_</span>
<span class="t" id="t72" style="left:759.57px;top:847px;font-size:12px;line-height:14px;font-weight:bold;color:#f4f4f4;transform:scaleX(0.9753);">FilmOut</span>
<span class="t" id="t73" style="left:467.96px;top:685px;font-size:11px;line-height:13px;font-weight:bold;color:#f0f0f0;transform:scaleX(1.1800);">e</span>
<span class="t" id="t74" style="left:20.98px;top:963px;font-size:10.5px;line-height:13px;font-weight:normal;color:#e4e4e4;transform:scaleX(1.0889);">1</span>
<span class="t" id="t75" style="left:57.98px;top:963px;font-size:10.5px;line-height:13px;font-weight:normal;color:#e4e4e4;transform:scaleX(1.0889);">1</span>
<span class="t" id="t76" style="left:1154.28px;top:963px;font-size:10.5px;line-height:13px;font-weight:normal;color:#e4e4e4;transform:scaleX(1.0889);">1</span>
<span class="t" id="t77" style="left:1199.69px;top:963px;font-size:10.5px;line-height:13px;font-weight:normal;color:#e4e4e4;transform:scaleX(1.0788);">100</span>
<span class="t" id="t78" style="left:1236.80px;top:963px;font-size:10.5px;line-height:13px;font-weight:normal;color:#e4e4e4;transform:scaleX(1.0727);">100</span>
<span class="t" id="t79" style="left:98.10px;top:963px;font-size:10.5px;line-height:13px;font-weight:normal;color:#f0dc2a;transform:scaleX(1.0667);">1</span>
<span class="t" id="t80" style="left:17.20px;top:111px;font-size:23.5px;line-height:28px;font-weight:normal;color:#ffffff;transform:scaleX(0.9060);">AUTHOR:</span>
<span class="t" id="t81" style="left:120.45px;top:111px;font-size:23.5px;line-height:28px;font-weight:normal;color:#ffffff;transform:scaleX(0.9982);">Gaffy</span>
<span class="t" id="t82" style="left:17.42px;top:135px;font-size:23.5px;line-height:28px;font-weight:normal;color:#ffffff;transform:scaleX(0.8914);">DESCRIPTION:</span>
<span class="t" id="t83" style="left:172.72px;top:135px;font-size:23.5px;line-height:28px;font-weight:normal;color:#ffffff;transform:scaleX(0.9400);">New</span>
<span class="t" id="t84" style="left:225.50px;top:135px;font-size:23.5px;line-height:28px;font-weight:normal;color:#ffffff;transform:scaleX(1.0013);">background</span>
<span class="t" id="t85" style="left:357.00px;top:135px;font-size:23.5px;line-height:28px;font-weight:normal;color:#ffffff;transform:scaleX(0.9980);">color</span>
</body></html>
